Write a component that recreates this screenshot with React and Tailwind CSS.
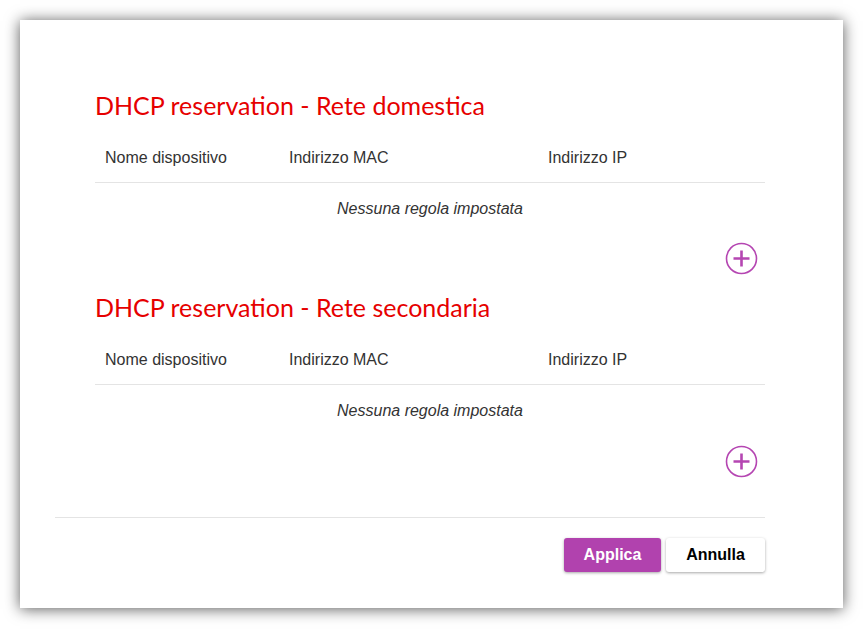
import React from 'react';

const COLS = ['w-[184px]', 'w-[259px]', 'flex-1'];

function PlusButton() {
  return (
    <button className="w-[33px] h-[33px] flex items-center justify-center" aria-label="Aggiungi">
      <svg width="33" height="33" viewBox="0 0 33 33">
        <circle cx="16.5" cy="16.5" r="15" fill="none" stroke="#b546b2" strokeWidth="1.6" />
        <path d="M16.5 8.5v16M8.5 16.5h16" stroke="#b546b2" strokeWidth="2.6" />
      </svg>
    </button>
  );
}

function Section({ title, top, plusTop }) {
  return (
    <div className={`flex flex-col ${top}`}>
      {/* Title */}
      <h2 className="h-[34px] text-[25px] leading-[34px] text-[#e60000] font-['Lato','Noto_Sans',sans-serif]">
        {title}
      </h2>
      {/* Table */}
      <div className="mt-[11px] flex h-[50px] items-center border-b border-[#e4e4e4] text-[16px] text-[#333]">
        {['Nome dispositivo', 'Indirizzo MAC', 'Indirizzo IP'].map((h, i) => (
          <div key={h} className={`${COLS[i]} pl-[10px]`}>{h}</div>
        ))}
      </div>
      <div className="h-[52px] flex items-center justify-center text-[16px] italic text-[#333]">
        Nessuna regola impostata
      </div>
      <div className={`flex justify-end pr-[7px] ${plusTop}`}>
        <PlusButton />
      </div>
    </div>
  );
}

export default function App() {
  return (
    <div className="w-[863px] h-[629px] bg-white p-[20px] pb-[21px] font-['Liberation_Sans',Arial,sans-serif]">
      <div className="w-[823px] h-[588px] bg-white shadow-[0_1px_14px_rgba(0,0,0,0.65)] flex flex-col">
        <div className="pl-[75px] pr-[78px] pt-[68px] flex flex-col">
          <Section title="DHCP reservation - Rete domestica" top="" plusTop="mt-[7px]" />
          <Section title="DHCP reservation - Rete secondaria" top="mt-[15px]" plusTop="mt-[8px]" />
        </div>
        <div className="ml-[35px] mr-[78px] mt-[39px] border-t border-[#e4e4e4] pt-[20px] flex justify-end gap-[5px]">
          <button className="w-[97px] h-[34px] rounded-[3px] bg-[#b142ae] text-white font-bold text-[16px] shadow-[0_1px_3px_rgba(0,0,0,0.35)]">
            Applica
          </button>
          <button className="w-[99px] h-[34px] rounded-[3px] bg-white text-black font-bold text-[16px] shadow-[0_1px_3px_rgba(0,0,0,0.35)]">
            Annulla
          </button>
        </div>
      </div>
    </div>
  );
}
